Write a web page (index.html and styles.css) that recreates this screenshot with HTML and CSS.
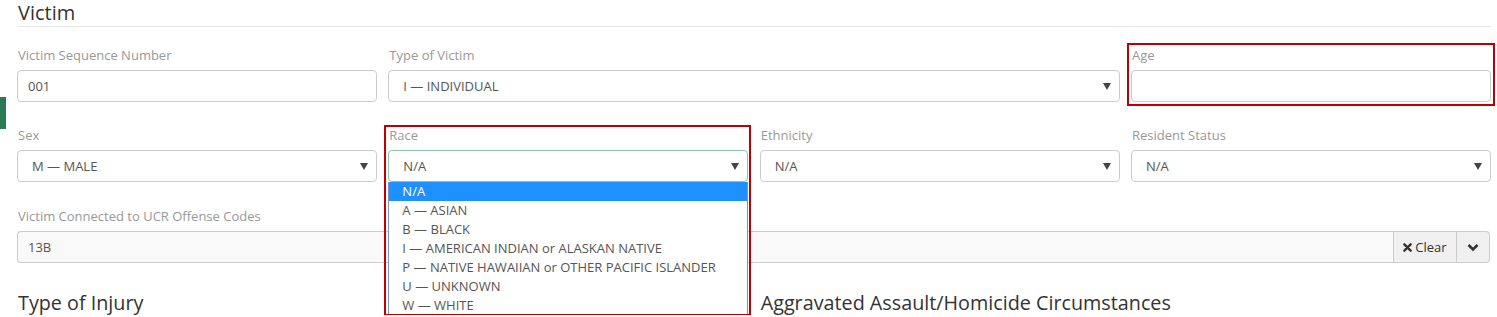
FILE: index.html
```html
<!DOCTYPE html>
<html>
<head>
<meta charset="utf-8">
<link rel="stylesheet" href="styles.css">
</head>
<body>
<div class="side-tab"></div>
<div class="page">
  <h3 class="section-title">Victim</h3>

  <div class="row">
    <div class="group">
      <label class="lbl">Victim Sequence Number</label>
      <div class="ctrl">001</div>
    </div>
    <div class="group span2">
      <label class="lbl">Type of Victim</label>
      <div class="ctrl select">I — INDIVIDUAL</div>
    </div>
    <div class="group">
      <div class="mark mark-age"></div>
      <label class="lbl">Age</label>
      <div class="ctrl"></div>
    </div>
  </div>

  <div class="row row-second">
    <div class="group">
      <label class="lbl">Sex</label>
      <div class="ctrl select">M — MALE</div>
    </div>
    <div class="group">
      <div class="mark mark-race"></div>
      <label class="lbl">Race</label>
      <div class="ctrl select focus">N/A</div>
      <ul class="dropdown">
        <li class="active">N/A</li>
        <li>A — ASIAN</li>
        <li>B — BLACK</li>
        <li>I — AMERICAN INDIAN or ALASKAN NATIVE</li>
        <li>P — NATIVE HAWAIIAN or OTHER PACIFIC ISLANDER</li>
        <li>U — UNKNOWN</li>
        <li>W — WHITE</li>
      </ul>
    </div>
    <div class="group">
      <label class="lbl">Ethnicity</label>
      <div class="ctrl select">N/A</div>
    </div>
    <div class="group">
      <label class="lbl">Resident Status</label>
      <div class="ctrl select">N/A</div>
    </div>
  </div>

  <div class="group full">
    <label class="lbl">Victim Connected to UCR Offense Codes</label>
    <div class="input-group">
      <div class="ctrl readonly">13B</div>
      <button class="btn btn-clear">
        <svg width="9" height="9" viewBox="0 0 10 10"><path d="M1.5 1.5 L8.5 8.5 M8.5 1.5 L1.5 8.5" stroke="#333" stroke-width="2.6" stroke-linecap="round"/></svg>
        Clear
      </button>
      <button class="btn btn-caret">
        <svg width="12" height="9" viewBox="0 0 12 9"><path d="M1.5 2 L6 6.5 L10.5 2" fill="none" stroke="#333" stroke-width="2.6"/></svg>
      </button>
    </div>
  </div>

  <div class="row headings">
    <h3 class="sub-title span2">Type of Injury</h3>
    <h3 class="sub-title span2">Aggravated Assault/Homicide Circumstances</h3>
  </div>
</div>
</body>
</html>
```

FILE: styles.css
```css
* { box-sizing: border-box; }
html, body {
  margin: 0;
  padding: 0;
  background: #fff;
  font-family: "Open Sans", "Liberation Sans", Arial, sans-serif;
  font-size: 13px;
  color: #555;
  overflow: hidden;
}
.side-tab {
  position: absolute;
  left: 0;
  top: 97px;
  width: 6px;
  height: 32px;
  background: #2b7a55;
}
.page {
  padding: 1px 6px 0 17px;
}
.section-title {
  margin: 0 0 19px 1px;
  font-size: 20px;
  font-weight: 400;
  line-height: 24px;
  color: #333;
  padding-bottom: 1px;
  border-bottom: 1px solid #e5e5e5;
}
.row {
  display: grid;
  grid-template-columns: repeat(4, 1fr);
  column-gap: 11.4px;
}
.span2 { grid-column: span 2; }
.group {
  position: relative;
  margin-bottom: 24px;
}
.row-second .group { margin-bottom: 25px; }
.group.full { margin-bottom: 28px; }
.lbl {
  display: block;
  line-height: 18px;
  margin-bottom: 6px;
  color: #999;
  padding-left: 1px;
}
.ctrl {
  height: 32px;
  border: 1px solid #ccc;
  border-radius: 4px;
  padding: 0 10px;
  line-height: 30px;
  background: #fff;
  color: #555;
}
.ctrl.select {
  padding-left: 14px;
  background-image: url("data:image/svg+xml;utf8,<svg xmlns='http://www.w3.org/2000/svg' width='8' height='7'><path d='M0 0 L8 0 L4 7 Z' fill='%23444'/></svg>");
  background-repeat: no-repeat;
  background-position: right 8px center;
}
.ctrl.focus {
  border-color: #8cc7a6;
}
.dropdown {
  position: absolute;
  left: 0;
  right: 0;
  top: 56px;
  margin: 0;
  padding: 0;
  list-style: none;
  background: #fff;
  border: 1px solid #7d8fc4;
  border-top: 0;
  z-index: 5;
}
.dropdown li {
  height: 19px;
  line-height: 19px;
  padding-left: 13px;
  color: #555;
  white-space: nowrap;
}
.dropdown li.active {
  background: #1e90ff;
  color: #fff;
}
.mark {
  position: absolute;
  border: 2px solid #c00000;
  pointer-events: none;
  z-index: 6;
}
.mark-age {
  top: -3px;
  left: -4px;
  right: -4px;
  bottom: -4px;
}
.mark-race {
  top: -1px;
  left: -4px;
  right: -3px;
  height: 191px;
}
.input-group {
  display: flex;
  width: 1473px;
}
.input-group .ctrl {
  flex: 1;
  border-radius: 4px 0 0 4px;
  background: #f9f9f9;
  border-right: 0;
}
.btn {
  height: 32px;
  border: 1px solid #ccc;
  background: #f0f0f0;
  font-family: inherit;
  font-size: 13px;
  color: #333;
  padding: 0;
  display: flex;
  align-items: center;
  justify-content: center;
}
.btn-clear {
  width: 64px;
  gap: 3px;
}
.btn-caret {
  width: 33px;
  border-left: 0;
  border-radius: 0 4px 4px 0;
}
.headings .sub-title {
  margin: 0 0 0 1px;
  font-size: 19.75px;
  font-weight: 400;
  line-height: 24px;
  color: #333;
}
```
